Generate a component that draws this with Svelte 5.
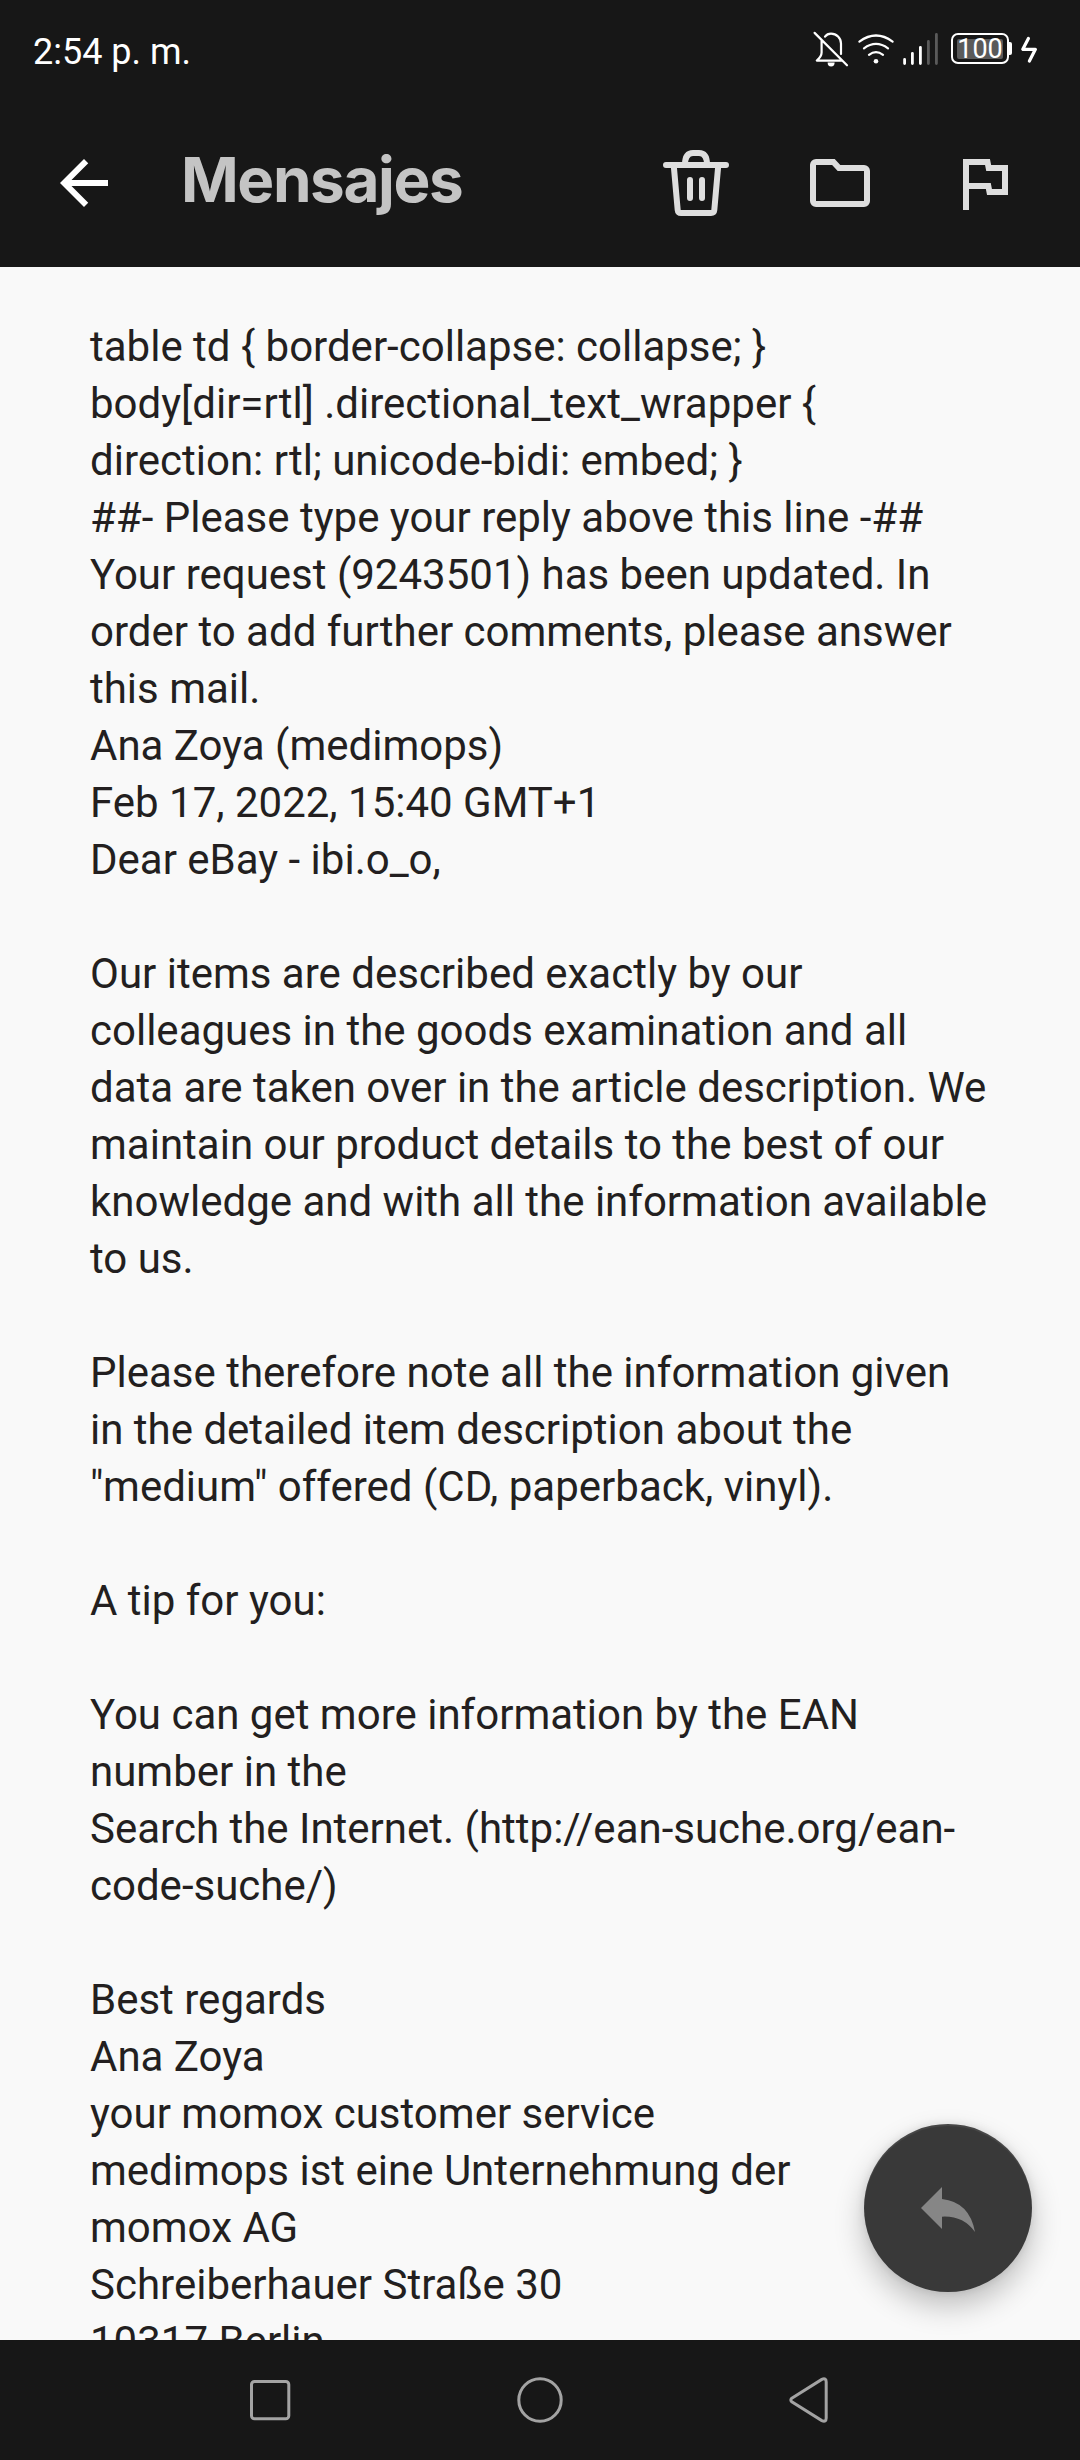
<script lang="ts">
  const title = 'Mensajes';
  const time = '2:54 p. m.';

  const lines: string[] = [
    'table td { border-collapse: collapse; }',
    'body[dir=rtl] .directional_text_wrapper {',
    'direction: rtl; unicode-bidi: embed; }',
    '##- Please type your reply above this line -##',
    'Your request (9243501) has been updated. In',
    'order to add further comments, please answer',
    'this mail.',
    'Ana Zoya (medimops)',
    'Feb 17, 2022, 15:40 GMT+1',
    'Dear eBay - ibi.o_o,',
    '',
    'Our items are described exactly by our',
    'colleagues in the goods examination and all',
    'data are taken over in the article description. We',
    'maintain our product details to the best of our',
    'knowledge and with all the information available',
    'to us.',
    '',
    'Please therefore note all the information given',
    'in the detailed item description about the',
    '"medium" offered (CD, paperback, vinyl).',
    '',
    'A tip for you:',
    '',
    'You can get more information by the EAN',
    'number in the',
    'Search the Internet. (http://ean-suche.org/ean-',
    'code-suche/)',
    '',
    'Best regards',
    'Ana Zoya',
    'your momox customer service',
    'medimops ist eine Unternehmung der',
    'momox AG',
    'Schreiberhauer Straße 30',
    '10317 Berlin'
  ];
</script>

<div class="screen">
  <div class="status-bar">
    <span class="time">{time}</span>
    <div class="status-icons">
      <svg class="bell" viewBox="812 30 38 40" width="38" height="40">
        <path d="M825 36.6C826.6 34.4 828.8 33.6 831 33.6a10 10 0 0 1 10 10V54M821.6 40.5V52.6q0 4-4.8 8H842M814.6 32.9 847 65.3" />
        <path class="solid" d="M827.6 62.5h7a3.5 4 0 0 1-7 0z" />
      </svg>
      <svg class="wifi" viewBox="856 30 40 40" width="40" height="40">
        <path d="M859.4 41.6Q876 29.4 892.6 41.6M864 48.3Q876 39.6 888 48.3M869 54.8Q876 49.4 883 54.8" />
        <circle class="solid" cx="876" cy="61.3" r="2.3" />
      </svg>
      <svg class="signal" viewBox="901 30 40 40" width="40" height="40">
        <path d="M904.6 59.5V63.6M912.4 53.3V63.6M920.4 47.3V63.6" />
        <path class="dim" d="M928.4 41.5V63.6M936.4 34.5V63.6" />
      </svg>
      <div class="battery"><span>100</span></div>
      <svg class="bolt" viewBox="1018 34 22 32" width="22" height="32">
        <path d="M1028.4 38.4 1022.8 49.3H1035.4L1029.4 61" />
      </svg>
    </div>
  </div>

  <header class="app-bar">
    <button class="icon-btn back" aria-label="Back">
      <svg viewBox="0 0 24 24" width="72" height="72">
        <path d="M20 11H7.830l5.590-5.590L12 4l-8 8 8 8 1.410-1.410L7.830 13H20v-2z" />
      </svg>
    </button>
    <h1>{title}</h1>
    <div class="actions">
      <button class="icon-btn" aria-label="Delete">
        <svg viewBox="660 147 72 72" width="72" height="72">
          <path class="round" d="M666 165H726M685 164.500Q685 153 693 153H699Q707 153 707 164.500M673.800 166 677.700 210Q678 213 681 213H711Q714 213 714.300 210L718.200 166M690 180V198M702 180V198" />
        </svg>
      </button>
      <button class="icon-btn" aria-label="Move to folder">
        <svg viewBox="804 147 72 72" width="72" height="72">
          <path d="M816 162H833.400L839 168H864a3 3 0 0 1 3 3V201a3 3 0 0 1-3 3H816a3 3 0 0 1-3-3V165a3 3 0 0 1 3-3z" />
        </svg>
      </button>
      <button class="icon-btn" aria-label="Flag">
        <svg viewBox="948 147 72 72" width="72" height="72">
          <path d="M966 210V162H987.500L988.700 168H1005V192H989.500L988.300 186H966" />
        </svg>
      </button>
    </div>
  </header>

  <main class="message">
    {#each lines as line}
      <p>{line}</p>
    {/each}
    <button class="fab" aria-label="Reply">
      <svg viewBox="864 2124 168 168" width="168" height="168">
        <path d="M921 2208 942 2187V2199Q969.500 2202 975 2232Q963 2215.500 942 2216.700V2229z" />
      </svg>
    </button>
  </main>

  <nav class="nav-bar">
    <svg viewBox="0 0 60 60" width="60" height="60">
      <rect x="11.500" y="11.500" width="37.300" height="37.300" rx="3" />
    </svg>
    <svg viewBox="0 0 60 60" width="60" height="60">
      <circle cx="30" cy="30" r="21.200" />
    </svg>
    <svg viewBox="780 2370 60 60" width="60" height="60">
      <path d="M791.800 2398.200 821.800 2379.400Q826.200 2377.500 826.200 2382V2418Q826.200 2422.500 821.800 2420.600L791.800 2401.800Q789.800 2400 791.800 2398.200z" />
    </svg>
  </nav>
</div>

<style>
  :global(body) {
    background: #171717;
  }

  .screen {
    display: flex;
    flex-direction: column;
    width: 1080px;
    height: 2460px;
    overflow: hidden;
    background: #171717;
    font-family: Roboto, sans-serif;
  }

  svg {
    display: block;
    fill: none;
  }

  button {
    padding: 0;
    border: none;
    background: none;
  }

  .status-bar {
    display: flex;
    justify-content: space-between;
    align-items: center;
    flex-shrink: 0;
    height: 100px;
    padding: 0 40px 0 33px;
    box-sizing: border-box;
  }

  .time {
    padding-top: 3px;
    font-size: 36px;
    color: #fff;
  }

  .status-icons {
    display: flex;
    align-items: center;
  }

  .status-icons svg {
    stroke: #fff;
    stroke-width: 2.2;
    stroke-linecap: round;
    stroke-linejoin: round;
  }

  .status-icons .solid {
    fill: #fff;
    stroke: none;
  }

  .status-icons .wifi {
    margin-left: 6px;
  }

  .status-icons .signal {
    margin-left: 5px;
    stroke-width: 2.8;
  }

  .signal .dim {
    stroke: #5a5a5a;
  }

  .battery {
    position: relative;
    width: 58px;
    height: 31px;
    margin: 0 9px 3px 10px;
    padding: 5px 6px;
    box-sizing: border-box;
    border: 2.5px solid #fff;
    border-radius: 7px;
  }

  .battery::after {
    content: '';
    position: absolute;
    top: 7px;
    right: -5px;
    width: 3px;
    height: 13px;
    border-radius: 0 2px 2px 0;
    background: #fff;
  }

  .battery span {
    display: block;
    height: 20px;
    margin: -1px -2px 0;
    border-radius: 2px;
    background: #5a5a5a;
    color: #fff;
    font-size: 27px;
    line-height: 21px;
    text-align: center;
  }

  .status-icons .bolt {
    stroke-width: 3.2;
  }

  .app-bar {
    display: flex;
    align-items: center;
    flex-shrink: 0;
    height: 167px;
    padding: 0 60px 1px 48px;
    box-sizing: border-box;
  }

  .icon-btn svg {
    stroke: #dedede;
    stroke-width: 6;
  }

  .back svg {
    fill: #fff;
    stroke: none;
  }

  .icon-btn .round {
    stroke-linecap: round;
  }

  h1 {
    margin: 0 0 7px 61px;
    font-family: Inter, Roboto, sans-serif;
    font-size: 62px;
    font-weight: 700;
    letter-spacing: -1.4px;
    color: #c4c4c4;
  }

  .actions {
    display: flex;
    gap: 72px;
    margin-left: auto;
  }

  .message {
    position: relative;
    flex: 1;
    min-height: 0;
    overflow: hidden;
    padding: 51px 60px 0 90px;
    background: #f9f9f9;
    color: #231f20;
  }

  p {
    height: 57px;
    margin: 0;
    font-size: 42px;
    line-height: 57px;
    white-space: pre;
  }

  .fab {
    position: absolute;
    right: 48px;
    bottom: 48px;
    border-radius: 50%;
    background: #393939;
    box-shadow:
      0 14px 30px rgba(0, 0, 0, 0.24),
      0 0 10px rgba(0, 0, 0, 0.1),
      inset 0 2px 1px rgba(255, 255, 255, 0.08);
  }

  .fab svg {
    fill: #868686;
  }

  .nav-bar {
    display: grid;
    grid-template-columns: repeat(3, 270px);
    justify-content: center;
    justify-items: center;
    align-items: center;
    flex-shrink: 0;
    height: 120px;
  }

  .nav-bar svg {
    stroke: #a3a3a3;
    stroke-width: 3;
  }
</style>
